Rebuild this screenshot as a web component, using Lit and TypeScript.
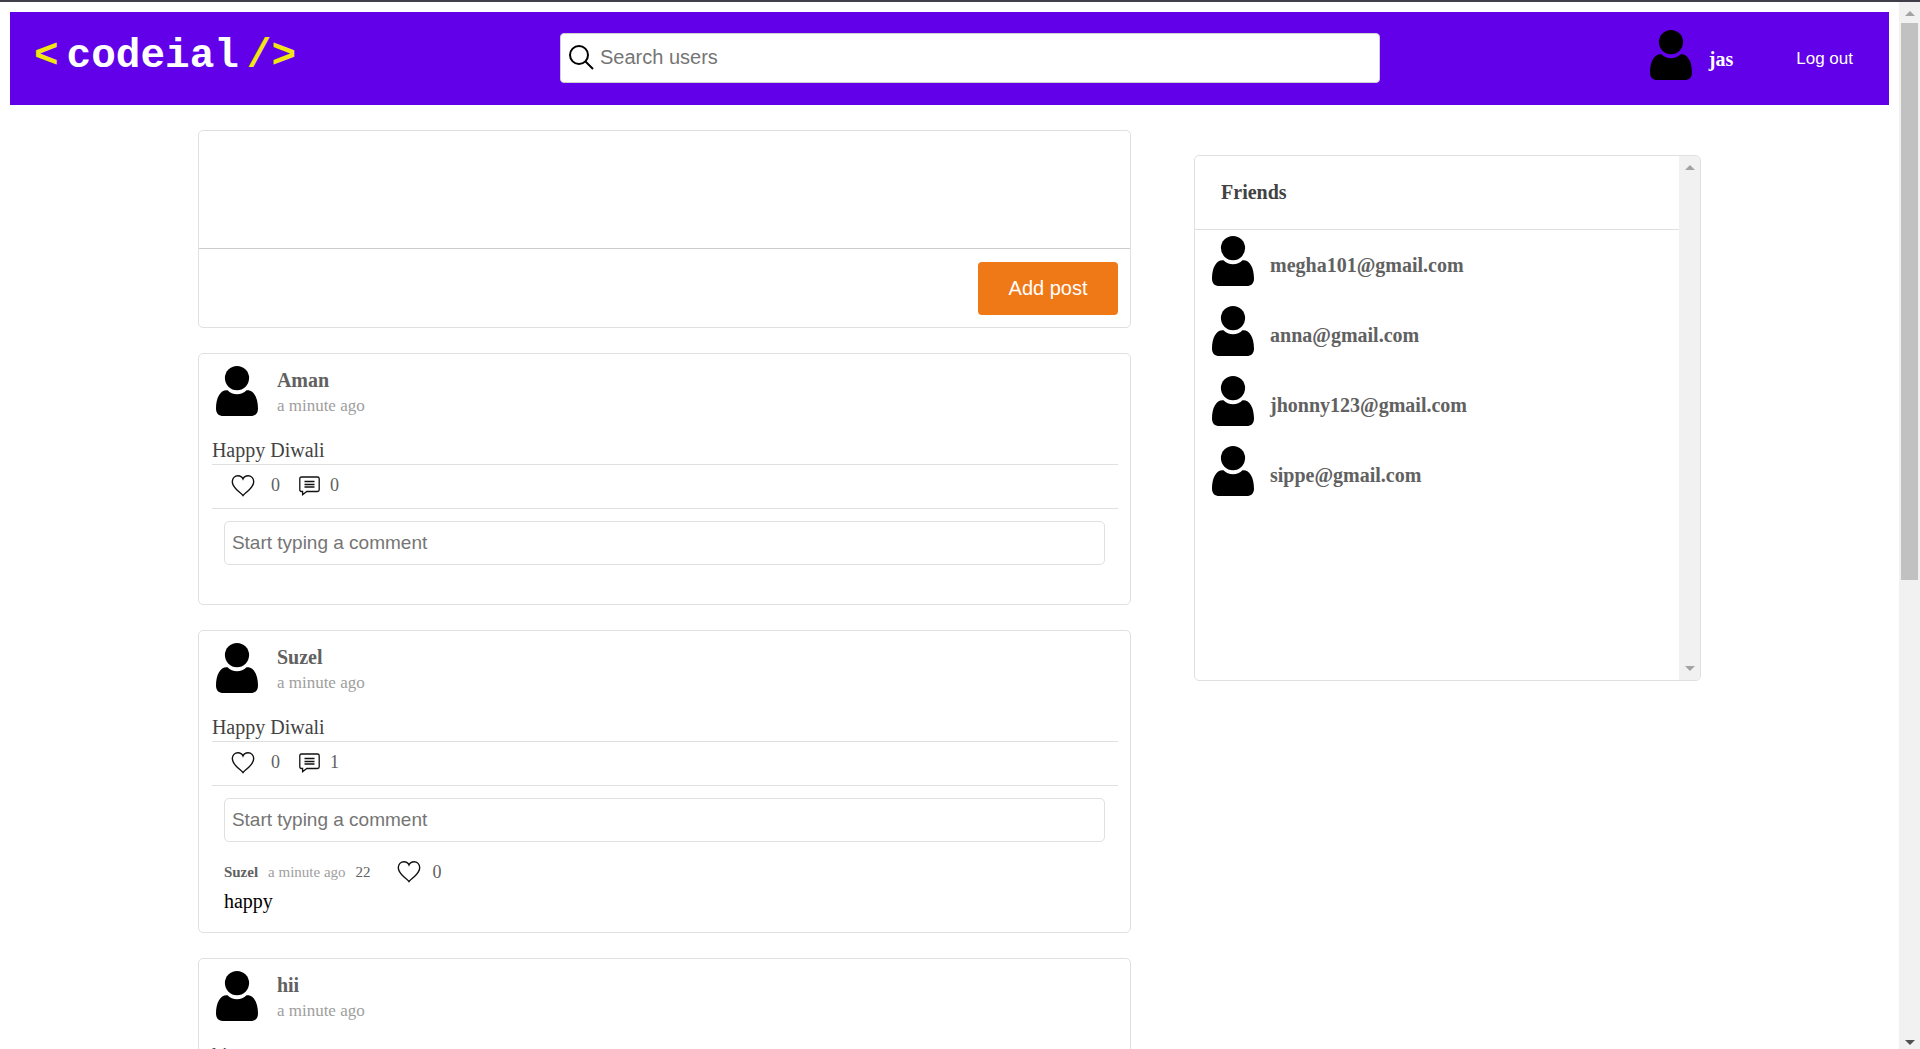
import { LitElement, html, svg, css, nothing } from "lit";
import { customElement, property } from "lit/decorators.js";

interface PostComment {
  author: string;
  time: string;
  id: number;
  likes: number;
  text: string;
}

interface Post {
  author: string;
  time: string;
  text: string;
  likes: number;
  comments: PostComment[];
}

const POSTS: Post[] = [
  { author: "Aman", time: "a minute ago", text: "Happy Diwali", likes: 0, comments: [] },
  {
    author: "Suzel",
    time: "a minute ago",
    text: "Happy Diwali",
    likes: 0,
    comments: [{ author: "Suzel", time: "a minute ago", id: 22, likes: 0, text: "happy" }],
  },
  { author: "hii", time: "a minute ago", text: "hi", likes: 0, comments: [] },
];

const FRIENDS = ["megha101@gmail.com", "anna@gmail.com", "jhonny123@gmail.com", "sippe@gmail.com"];

const avatarIcon = html`<svg class="avatar" viewBox="0 0 50 50" aria-hidden="true">
  ${svg`<circle cx="25" cy="12.1" r="12.1" />
  <path d="M15.5 24.3C18 26.8 21.3 28.2 25 28.2S32 26.8 34.5 24.3C41.5 23.6 46 31.5 46 42.5C46 47.5 43.3 50 38.5 50H11.5C6.7 50 4 47.5 4 42.5C4 31.5 8.5 23.6 15.5 24.3Z" />`}
</svg>`;

const heartIcon = html`<svg class="heart" viewBox="0 0 24 24" aria-hidden="true">
  ${svg`<path d="M12 21.6C10.5 19.6 8 18 5.5 15.5C3 13 1.3 10.6 1.3 7.6C1.3 4.2 3.8 1.7 6.9 1.7C9.2 1.7 11.1 2.9 12 5C12.9 2.9 14.8 1.7 17.1 1.7C20.2 1.7 22.7 4.2 22.7 7.6C22.7 10.6 21 13 18.5 15.5C16 18 13.5 19.6 12 21.6Z" />`}
</svg>`;

const commentIcon = html`<svg class="bubble" viewBox="0 0 21 20" aria-hidden="true">
  ${svg`<path d="M2.5 1H18.5Q20.2 1 20.2 2.7V13.8Q20.2 15.5 18.5 15.5H7.8L3.6 18.7V15.5H2.5Q.8 15.5 .8 13.8V2.7Q.8 1 2.5 1Z" />
  <path d="M5.5 5.5H15.5M5.5 8.5H15.5M5.5 11H15.5" />`}
</svg>`;

const searchIcon = html`<svg class="search-icon" viewBox="0 0 25 25" aria-hidden="true">
  ${svg`<circle cx="10" cy="10" r="9" /><path d="M16.5 16.5L24 24" />`}
</svg>`;

const iconStyles = css`
  .avatar {
    display: block;
    flex: none;
    width: 50px;
    height: 50px;
    fill: #000;
  }
  .heart,
  .bubble,
  .search-icon {
    display: block;
    flex: none;
    fill: none;
    stroke: #111;
  }
  .heart {
    width: 24px;
    height: 24px;
    stroke-width: 1.4;
  }
  .bubble {
    width: 21px;
    height: 20px;
    stroke-width: 1.3;
  }
  .search-icon {
    width: 25px;
    height: 25px;
    stroke: #000;
    stroke-width: 2;
  }
`;

@customElement("scroll-rail")
class ScrollRail extends LitElement {
  @property({ type: Boolean }) scrollable = false;

  static styles = css`
    :host {
      display: flex;
      flex-direction: column;
      flex: none;
      width: 21px;
      background: #f1f1f1;
    }
    .end {
      display: grid;
      place-items: center;
      box-sizing: border-box;
      height: 21px;
    }
    .end.up {
      padding-top: 2px;
    }
    .end.down {
      padding-bottom: 2px;
    }
    .end.short {
      height: 13px;
      padding: 0;
    }
    .arrow {
      width: 10px;
      height: 5px;
      fill: #a3a3a3;
    }
    .short .arrow {
      fill: #505050;
    }
    .track {
      flex: 1;
      padding: 0 2px;
    }
    .thumb {
      height: 55%;
      background: #c1c1c1;
    }
  `;

  render() {
    return html`
      <div class="end up"><svg class="arrow" viewBox="0 0 10 5"><path d="M0 5L5 0L10 5Z" /></svg></div>
      <div class="track">${this.scrollable ? html`<div class="thumb"></div>` : nothing}</div>
      <div class="end down ${this.scrollable ? "short" : ""}">
        <svg class="arrow" viewBox="0 0 10 5"><path d="M0 0H10L5 5Z" /></svg>
      </div>
    `;
  }
}

@customElement("post-card")
class PostCard extends LitElement {
  @property({ attribute: false }) post!: Post;

  static styles = [
    iconStyles,
    css`
      :host {
        display: block;
      }
      .card {
        box-sizing: border-box;
        border: 1px solid #e0e0e0;
        border-radius: 5px;
        padding: 12px 12px 14px 13px;
        font-family: "Liberation Serif", "Times New Roman", serif;
        font-size: 20px;
        color: #424242;
      }
      .head {
        display: flex;
        gap: 15px;
        height: 70px;
      }
      .byline {
        padding-top: 1px;
      }
      .name,
      .time {
        display: block;
        line-height: 26px;
      }
      .name {
        font-weight: bold;
        color: #616161;
        text-decoration: none;
      }
      .time {
        font-size: 17px;
        color: #9e9e9e;
      }
      .text,
      .comment-text {
        margin: 0;
        line-height: 28px;
      }
      .actions {
        display: flex;
        align-items: center;
        gap: 19px;
        height: 41px;
        padding: 0 19px 2px;
        border: solid #e0e0e0;
        border-width: 1px 0;
      }
      .action {
        display: flex;
        align-items: center;
        gap: 10px;
        padding: 0;
        border: 0;
        background: none;
        font-family: inherit;
        font-size: 18px;
        color: #616161;
      }
      .action.like {
        gap: 16px;
      }
      .comments {
        padding: 12px 13px 0 12px;
      }
      .field {
        display: block;
        box-sizing: border-box;
        width: 100%;
        height: 44px;
        padding: 0 7px;
        border: 1px solid #e0e0e0;
        border-radius: 5px;
        font-family: "Liberation Sans", Arial, sans-serif;
        font-size: 19px;
      }
      .field::placeholder {
        color: #757575;
      }
      .list {
        box-sizing: border-box;
        min-height: 25px;
        margin: 0;
        padding: 18px 0 3px;
        list-style: none;
      }
      .comment {
        display: grid;
        gap: 3px;
      }
      .meta {
        display: flex;
        align-items: center;
        gap: 10px;
        height: 24px;
        font-size: 15px;
        color: #616161;
      }
      .meta .ago {
        color: #9e9e9e;
      }
      .comment-like {
        gap: 12px;
        margin-left: 16px;
      }
      .comment-text {
        color: #000;
      }
    `,
  ];

  render() {
    const p = this.post;
    return html`
      <article class="card">
        <header class="head">
          ${avatarIcon}
          <div class="byline">
            <a class="name" href="#profile">${p.author}</a>
            <span class="time">${p.time}</span>
          </div>
        </header>
        <p class="text">${p.text}</p>
        <div class="actions">
          <button class="action like" type="button" aria-label="Like, ${p.likes}">${heartIcon}<span>${p.likes}</span></button>
          <button class="action" type="button" aria-label="Comments, ${p.comments.length}">
            ${commentIcon}<span>${p.comments.length}</span>
          </button>
        </div>
        <div class="comments">
          <input class="field" type="text" aria-label="Comment" placeholder="Start typing a comment" />
          <ul class="list">
            ${p.comments.map(
              (c) => html`<li class="comment">
                <div class="meta">
                  <b>${c.author}</b>
                  <span class="ago">${c.time}</span>
                  <span>${c.id}</span>
                  <button class="action comment-like" type="button" aria-label="Like comment, ${c.likes}">
                    ${heartIcon}<span>${c.likes}</span>
                  </button>
                </div>
                <p class="comment-text">${c.text}</p>
              </li>`
            )}
          </ul>
        </div>
      </article>
    `;
  }
}

@customElement("app-root")
class AppRoot extends LitElement {
  static styles = [
    iconStyles,
    css`
      :host {
        display: flex;
        box-sizing: border-box;
        height: 100vh;
        border-top: 2px solid #423e48;
        background: #fff;
        font-family: "Liberation Serif", "Times New Roman", serif;
        font-size: 20px;
        color: #424242;
      }
      .page {
        flex: 1;
        min-width: 0;
        padding: 10px;
        overflow-y: auto;
        scrollbar-width: none;
      }
      .nav {
        display: grid;
        grid-template-columns: 550fr 820fr 509fr;
        align-items: center;
        height: 93px;
        background: #6200ea;
        color: #fff;
      }
      .logo {
        display: flex;
        gap: 8px;
        padding: 0 0 5px 24px;
        font-family: "Liberation Mono", "Courier New", monospace;
        font-size: 41px;
        font-weight: bold;
        line-height: 46px;
        color: #fff;
        text-decoration: none;
      }
      .mark {
        color: #f0e614;
      }
      .search {
        display: flex;
        align-items: center;
        gap: 6px;
        box-sizing: border-box;
        height: 50px;
        margin-bottom: 2px;
        padding: 0 8px;
        border: 1px solid #d0d0d0;
        border-radius: 4px;
        background: #fff;
      }
      .search-input {
        flex: 1;
        min-width: 0;
        padding: 0;
        border: 0;
        outline: 0;
        background: none;
        font-family: "Liberation Sans", Arial, sans-serif;
        font-size: 20px;
      }
      .search-input::placeholder {
        color: #757575;
      }
      .account {
        display: flex;
        justify-content: flex-end;
        align-items: center;
        gap: 63px;
        padding-right: 36px;
      }
      .me {
        display: flex;
        gap: 13px;
        font-weight: bold;
        line-height: 58px;
        color: #fff;
        text-decoration: none;
      }
      .logout {
        font-family: "Liberation Sans", Arial, sans-serif;
        font-size: 17px;
        color: #fff;
        text-decoration: none;
      }
      .main {
        display: grid;
        grid-template-columns: 933fr 507fr;
        align-items: start;
        gap: 63px;
        padding: 25px 10%;
      }
      .feed {
        display: grid;
        gap: 25px;
      }
      .composer {
        border: 1px solid #e0e0e0;
        border-radius: 5px;
      }
      .draft {
        display: block;
        box-sizing: border-box;
        width: 100%;
        height: 118px;
        padding: 12px;
        border: 0;
        border-bottom: 1px solid #ccc;
        border-radius: 5px 5px 0 0;
        outline: 0;
        resize: none;
        font-family: inherit;
        font-size: 20px;
      }
      .composer-foot {
        display: flex;
        justify-content: flex-end;
        padding: 13px 12px 12px;
      }
      .add {
        min-width: 140px;
        height: 53px;
        padding: 0 30px;
        border: 0;
        border-radius: 4px;
        background: #ef7817;
        font-family: "Liberation Sans", Arial, sans-serif;
        font-size: 20px;
        color: #fff;
      }
      .friends {
        display: flex;
        min-height: 524px;
        margin-top: 25px;
        border: 1px solid #e0e0e0;
        border-radius: 5px;
        overflow: hidden;
      }
      .friends-body {
        flex: 1;
      }
      .friends-title {
        margin: 0;
        padding-left: 26px;
        border-bottom: 1px solid #e0e0e0;
        font-size: 20px;
        line-height: 73px;
      }
      .friends-list {
        margin: 0;
        padding: 0;
        list-style: none;
      }
      .friend {
        display: flex;
        gap: 12px;
        height: 64px;
        padding: 6px 13px 0;
        font-weight: bold;
        line-height: 58px;
        color: #616161;
        text-decoration: none;
      }
    `,
  ];

  render() {
    return html`
      <div class="page">
        <nav class="nav">
          <a class="logo" href="#home">
            <span class="mark">&lt;</span><span>codeial</span><span class="mark">/&gt;</span>
          </a>
          <label class="search">
            ${searchIcon}
            <input class="search-input" type="text" aria-label="Search users" placeholder="Search users" />
          </label>
          <div class="account">
            <a class="me" href="#settings">${avatarIcon}<span>jas</span></a>
            <a class="logout" href="#logout">Log out</a>
          </div>
        </nav>
        <main class="main">
          <section class="feed">
            <form class="composer">
              <textarea class="draft" aria-label="New post"></textarea>
              <div class="composer-foot"><button class="add" type="button">Add post</button></div>
            </form>
            ${POSTS.map((post) => html`<post-card .post=${post}></post-card>`)}
          </section>
          <aside class="friends">
            <div class="friends-body">
              <h2 class="friends-title">Friends</h2>
              <ul class="friends-list">
                ${FRIENDS.map(
                  (email) => html`<li><a class="friend" href="#friend">${avatarIcon}<span>${email}</span></a></li>`
                )}
              </ul>
            </div>
            <scroll-rail></scroll-rail>
          </aside>
        </main>
      </div>
      <scroll-rail scrollable></scroll-rail>
    `;
  }
}
